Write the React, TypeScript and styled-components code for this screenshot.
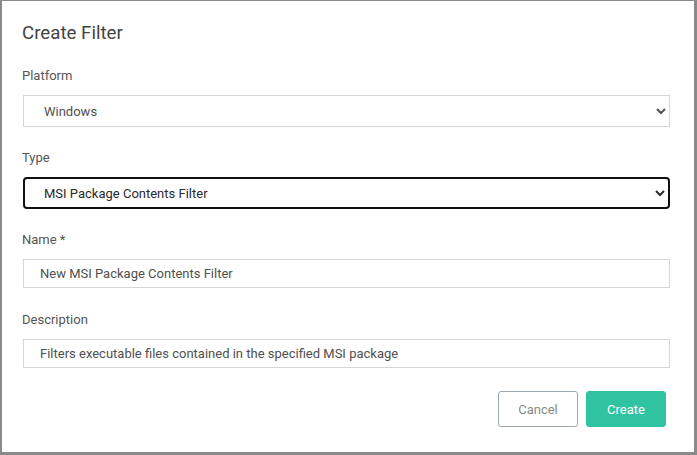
import React from "react";
import styled, { createGlobalStyle } from "styled-components";

const Global = createGlobalStyle`
  html, body { margin: 0; padding: 0; background: #ffffff; }
  body { font-family: Roboto, "Liberation Sans", Arial, sans-serif; }
  * { box-sizing: border-box; }
`;

const Frame = styled.div`
  width: 697px;
  height: 455px;
  border-style: solid;
  border-color: #8a8a8a;
  border-width: 1px 3px 3px 2px;
  background: #fff;
  padding: 20px 24px 0 20px;
  display: flex;
  flex-direction: column;
`;

const Title = styled.h1`
  margin: 0 0 20px 0;
  font-size: 18.7px;
  line-height: 24px;
  font-weight: 400;
  color: #444;
`;

const Form = styled.form`
  display: flex;
  flex-direction: column;
  gap: 20px;
  padding-left: 1px;
`;

const Group = styled.div<{ $extra?: number }>`
  display: flex;
  flex-direction: column;
  gap: 9px;
  margin-top: ${(p) => p.$extra ?? 0}px;
`;

const Label = styled.label`
  font-size: 13px;
  line-height: 21px;
  color: #555;
  margin-left: -1px;
`;

const Select = styled.select<{ $focused?: boolean }>`
  height: 32px;
  width: 100%;
  font-family: inherit;
  font-size: 13px;
  color: ${(p) => (p.$focused ? "#2a2a2a" : "#505050")};
  background: #fff;
  padding: 0 6px 0 ${(p) => (p.$focused ? "15px" : "16px")};
  border: ${(p) => (p.$focused ? "2px solid #111" : "1px solid #d6d6d6")};
  border-radius: ${(p) => (p.$focused ? "4px" : "0")};
  outline: none;
`;

const Input = styled.input`
  height: 29px;
  width: 100%;
  font-family: inherit;
  font-size: 13px;
  color: #505050;
  background: #fff;
  padding: 0 16px;
  border: 1px solid #d6d6d6;
  border-radius: 0;
  outline: none;
`;

const Actions = styled.div`
  display: flex;
  justify-content: flex-end;
  gap: 8px;
  margin-top: 23px;
  padding-right: 4px;
`;

const Button = styled.button<{ $primary?: boolean }>`
  width: 80px;
  height: 36px;
  font-family: inherit;
  font-size: 13px;
  font-weight: 400;
  border-radius: 3px;
  cursor: pointer;
  color: ${(p) => (p.$primary ? "#fff" : "#8a8a8a")};
  background: ${(p) => (p.$primary ? "#30c3a2" : "#fff")};
  border: 1px solid ${(p) => (p.$primary ? "#30c3a2" : "#9ea7ae")};
`;

export default function App() {
  return (
    <>
      <Global />
      <Frame>
        <Title>Create Filter</Title>
        <Form onSubmit={(e) => e.preventDefault()}>
          <Group>
            <Label>Platform</Label>
            <Select defaultValue="windows">
              <option value="windows">Windows</option>
            </Select>
          </Group>
          <Group>
            <Label>Type</Label>
            <Select $focused defaultValue="msi">
              <option value="msi">MSI Package Contents Filter</option>
            </Select>
          </Group>
          <Group>
            <Label>Name *</Label>
            <Input defaultValue="New MSI Package Contents Filter" />
          </Group>
          <Group $extra={1}>
            <Label>Description</Label>
            <Input defaultValue="Filters executable files contained in the specified MSI package" />
          </Group>
        </Form>
        <Actions>
          <Button type="button">Cancel</Button>
          <Button type="button" $primary>
            Create
          </Button>
        </Actions>
      </Frame>
    </>
  );
}
